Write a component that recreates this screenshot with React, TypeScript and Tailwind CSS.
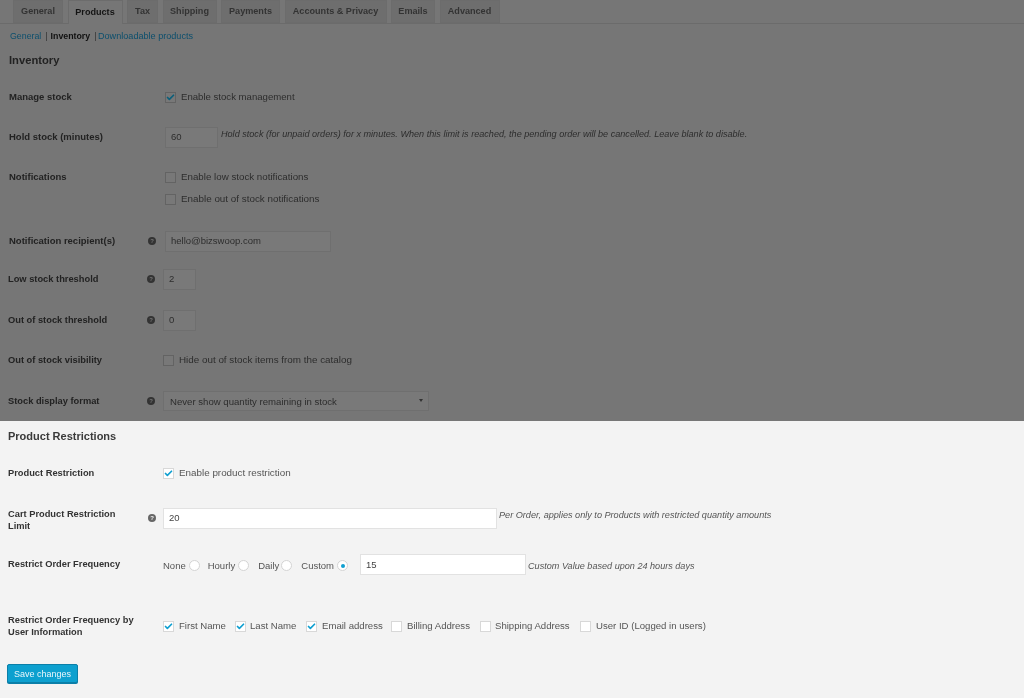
import { Check } from 'lucide-react';

const tabs = [
  { label: 'General', width: 'w-[50px]' },
  { label: 'Products', width: 'w-[55px]', active: true },
  { label: 'Tax', width: 'w-[31px]' },
  { label: 'Shipping', width: 'w-[54px]' },
  { label: 'Payments', width: 'w-[59px]' },
  { label: 'Accounts & Privacy', width: 'w-[102px]' },
  { label: 'Emails', width: 'w-[44px]' },
  { label: 'Advanced', width: 'w-[60px]' },
];

const userFields = [
  { label: 'First Name', width: 'w-[72px]', gap: 'gap-[5px]', checked: true },
  { label: 'Last Name', width: 'w-[71px]', gap: 'gap-[4px]', checked: true },
  { label: 'Email address', width: 'w-[85px]', gap: 'gap-[5px]', checked: true },
  { label: 'Billing Address', width: 'w-[89px]', gap: 'gap-[5px]' },
  { label: 'Shipping Address', width: 'w-[100px]', gap: 'gap-[4px]' },
  { label: 'User ID (Logged in users)', width: 'w-[130px]', gap: 'gap-[5px]' },
];

function Help({ light }: { light?: boolean }) {
  return (
    <span
      className={`flex h-[8px] w-[8px] items-center justify-center rounded-full text-[6px] font-bold leading-none ${
        light ? 'bg-[#666666] text-[#f3f3f3]' : 'bg-[#333333] text-[#767676]'
      }`}
    >
      ?
    </span>
  );
}

function Box({ checked, light }: { checked?: boolean; light?: boolean }) {
  return (
    <span
      className={`flex h-[11px] w-[11px] shrink-0 items-center justify-center border ${
        light ? 'border-[#d8d8d8] bg-white' : 'border-[#636363] bg-[#787878]'
      }`}
    >
      {checked && (
        <Check
          className={`h-[9px] w-[9px] shrink-0 ${light ? 'text-[#0f9fd0]' : 'text-[#0b5f7a]'}`}
          strokeWidth={4.5}
        />
      )}
    </span>
  );
}

function Radio({ checked }: { checked?: boolean }) {
  return (
    <span className="flex h-[11px] w-[11px] shrink-0 items-center justify-center rounded-full border border-[#d4d4d4] bg-white">
      {checked && <span className="h-[4px] w-[4px] rounded-full bg-[#0f9fd0]" />}
    </span>
  );
}

function DarkInput({ value, width }: { value: string; width: string }) {
  return (
    <span className={`flex h-[21px] items-center border border-[#6f6f6f] bg-[#797979] pl-[5px] text-[9.5px] text-[#2d2d2d] ${width}`}>
      {value}
    </span>
  );
}

function LightInput({ value, width }: { value: string; width: string }) {
  return (
    <span className={`flex h-[21px] shrink-0 items-center border border-[#e2e2e2] bg-white pl-[5px] text-[9.5px] text-[#444444] ${width}`}>
      {value}
    </span>
  );
}

function DarkRow({
  label,
  help,
  height,
  children,
  indent,
}: {
  label: string;
  help?: boolean;
  height: string;
  children: React.ReactNode;
  indent?: boolean;
}) {
  return (
    <div className={`flex items-center ${height} ${indent ? 'pl-[9px] text-[9.5px]' : 'pl-[8px] text-[9.3px]'}`}>
      <div className="flex w-[147px] items-center justify-between font-bold text-[#222222]">
        <span>{label}</span>
        {help && <Help />}
      </div>
      <div className={`flex items-center gap-[5px] text-[9.75px] text-[#2d2d2d] ${indent ? 'pl-[9px]' : 'pl-[8px]'}`}>
        {children}
      </div>
    </div>
  );
}

export default function App() {
  return (
    <div className="h-[698px] w-[1024px] overflow-hidden bg-[#f3f3f3] font-['Liberation_Sans',Arial,sans-serif] text-[9.75px] leading-[12px] blur-[0.6px]">
      {/* Dimmed settings */}
      <div className="h-[421px] bg-[#767676]">
        <div className="flex h-[24px] gap-[4.5px] border-b border-[#6b6b6b] pl-[13px] text-[9.1px]">
          {tabs.map((tab) => (
            <div
              key={tab.label}
              className={`flex items-center justify-center border border-[#6c6c6c] font-bold ${tab.width} ${
                tab.active
                  ? 'h-[24px] border-b-0 bg-[#767676] pb-[2px] text-[#141414]'
                  : 'h-[23px] bg-[#6e6e6e] pb-[1px] text-[#333333]'
              }`}
            >
              {tab.label}
            </div>
          ))}
        </div>

        <div className="flex h-[23px] items-center pl-[10px] text-[8.8px] text-[#0c4f6d]">
          <span>General</span>
          <span className="ml-[4px] text-[#333333]">|</span>
          <span className="ml-[3px] font-bold text-[#111111]">Inventory</span>
          <span className="ml-[4px] text-[#333333]">|</span>
          <span className="ml-[1.5px] text-[9.1px]">Downloadable products</span>
        </div>

        <div className="flex h-[26px] items-center pl-[9px] text-[11.2px] font-bold text-[#222222]">Inventory</div>

        <DarkRow label="Manage stock" height="h-[48px]" indent>
          <Box checked />
          <span className="text-[9.6px]">Enable stock management</span>
        </DarkRow>
        <DarkRow label="Hold stock (minutes)" height="h-[32px]" indent>
          <DarkInput value="60" width="w-[53px]" />
          <span className="-mt-[7px] -ml-[2px] text-[9.1px] italic">
            Hold stock (for unpaid orders) for x minutes. When this limit is reached, the pending order will be
            cancelled. Leave blank to disable.
          </span>
        </DarkRow>
        <DarkRow label="Notifications" height="h-[48px]" indent>
          <Box />
          <span>Enable low stock notifications</span>
        </DarkRow>
        <div className="-mt-[11px] flex h-[18px] items-center gap-[5px] pl-[165px] text-[9.85px] text-[#2d2d2d]">
          <Box />
          <span>Enable out of stock notifications</span>
        </div>
        <div className="h-[20px]" />
        <DarkRow label="Notification recipient(s)" help height="h-[26px]" indent>
          <DarkInput value="hello@bizswoop.com" width="w-[166px]" />
        </DarkRow>
        <DarkRow label="Low stock threshold" help height="h-[50px]">
          <DarkInput value="2" width="w-[33px]" />
        </DarkRow>
        <DarkRow label="Out of stock threshold" help height="h-[32px]">
          <DarkInput value="0" width="w-[33px]" />
        </DarkRow>
        <DarkRow label="Out of stock visibility" height="h-[48px]">
          <Box />
          <span className="text-[9.85px]">Hide out of stock items from the catalog</span>
        </DarkRow>
        <DarkRow label="Stock display format" help height="h-[33px]">
          <span className="flex h-[20px] w-[266px] items-center justify-between border border-[#6f6f6f] bg-[#797979] pr-[5px] pl-[6px] text-[9.6px]">
            <span className="translate-y-[1px]">Never show quantity remaining in stock</span>
            <span className="h-0 w-0 border-x-[2.5px] border-t-[3px] border-x-transparent border-t-[#333333]" />
          </span>
        </DarkRow>
      </div>

      {/* Product restrictions */}
      <div className="flex h-[30px] items-center pl-[8px] text-[11px] font-bold text-[#3a3a3a]">Product Restrictions</div>

      <div className="flex h-[44px] items-center pl-[8px] text-[#555555]">
        <span className="w-[155px] text-[9.3px] font-bold text-[#333333]">Product Restriction</span>
        <div className="flex items-center gap-[5px]">
          <Box checked light />
          <span className="text-[9.85px]">Enable product restriction</span>
        </div>
      </div>

      <div className="flex h-[46px] items-center pl-[8px] text-[#555555]">
        <div className="flex w-[155px] items-center justify-between pr-[7px] text-[9.3px] font-bold text-[#333333]">
          <span className="w-[120px] translate-y-[1.5px]">Cart Product Restriction Limit</span>
          <Help light />
        </div>
        <LightInput value="20" width="w-[334px]" />
        <span className="-mt-[6px] ml-[2px] text-[9.15px] italic">
          Per Order, applies only to Products with restricted quantity amounts
        </span>
      </div>

      <div className="mt-[2px] flex h-[44px] items-center pl-[8px] text-[#555555]">
        <span className="-mt-[3px] w-[155px] text-[9.3px] font-bold text-[#333333]">Restrict Order Frequency</span>
        <div className="mt-[1px] flex items-center text-[9.5px]">
          <span>None</span>
          <span className="ml-[3px]"><Radio /></span>
          <span className="ml-[8px]">Hourly</span>
          <span className="ml-[3px]"><Radio /></span>
          <span className="ml-[9px]">Daily</span>
          <span className="ml-[2px]"><Radio /></span>
          <span className="ml-[9px]">Custom</span>
          <span className="ml-[3px]"><Radio checked /></span>
          <span className="ml-[12px] -mt-[2px]"><LightInput value="15" width="w-[166px]" /></span>
          <span className="ml-[2px] text-[9.1px] italic">Custom Value based upon 24 hours days</span>
        </div>
      </div>

      <div className="mt-[17px] flex h-[44px] items-center pl-[8px] text-[#555555]">
        <span className="w-[155px] text-[9.3px] font-bold text-[#333333]">
          Restrict Order Frequency by
          <br />
          User Information
        </span>
        <div className="flex items-center text-[9.6px]">
          {userFields.map((field) => (
            <div key={field.label} className={`flex items-center ${field.width} ${field.gap}`}>
              <Box checked={field.checked} light />
              <span className="whitespace-nowrap">{field.label}</span>
            </div>
          ))}
        </div>
      </div>

      <div className="mt-[16px] pl-[7px]">
        <button className="h-[19px] w-[71px] rounded-[2px] border border-[#0b7fa8] bg-[#0da0cf] font-['Liberation_Sans',Arial,sans-serif] text-[9px] text-[#e8f6fb] shadow-[0_1px_0_#0b7fa8]">
          Save changes
        </button>
      </div>
    </div>
  );
}
